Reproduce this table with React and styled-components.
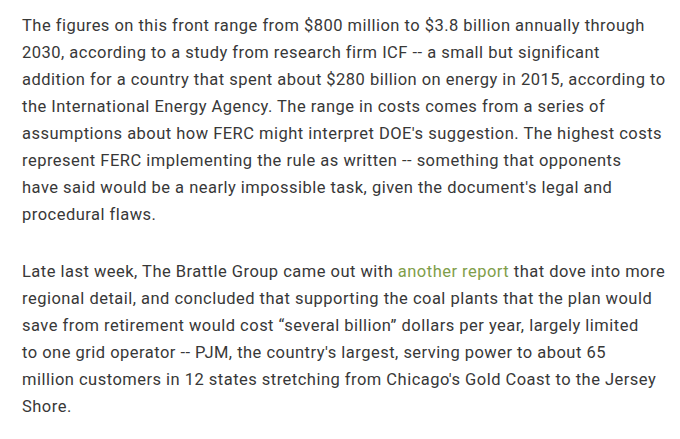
import React from 'react';
import styled, { createGlobalStyle } from 'styled-components';

const Global = createGlobalStyle`
  body {
    margin: 0;
    background: #fff;
  }
`;

const Article = styled.article`
  width: 656px;
  padding: 12px 0 0 22px;
  font-family: Roboto, "Liberation Sans", sans-serif;
  font-size: 16.5px;
  line-height: 27px;
  letter-spacing: 0.48px;
  color: #383838;
`;

const Para = styled.p`
  margin: 0 0 30px;
`;

const Link = styled.a`
  color: #7f9e4a;
  text-decoration: none;
`;

export default function App() {
  return (
    <>
      <Global />
      <Article>
        <Para>
          The figures on this front range from $800 million to $3.8 billion annually through<br />
          2030, according to a study from research firm ICF -- a small but significant<br />
          addition for a country that spent about $280 billion on energy in 2015, according to<br />
          the International Energy Agency. The range in costs comes from a series of<br />
          assumptions about how FERC might interpret DOE's suggestion. The highest costs<br />
          represent FERC implementing the rule as written -- something that opponents<br />
          have said would be a nearly impossible task, given the document's legal and<br />
          procedural flaws.
        </Para>
        <Para>
          Late last week, The Brattle Group came out with <Link href="#">another report</Link> that dove into more<br />
          regional detail, and concluded that supporting the coal plants that the plan would<br />
          save from retirement would cost “several billion” dollars per year, largely limited<br />
          to one grid operator -- PJM, the country's largest, serving power to about 65<br />
          million customers in 12 states stretching from Chicago's Gold Coast to the Jersey<br />
          Shore.
        </Para>
      </Article>
    </>
  );
}
